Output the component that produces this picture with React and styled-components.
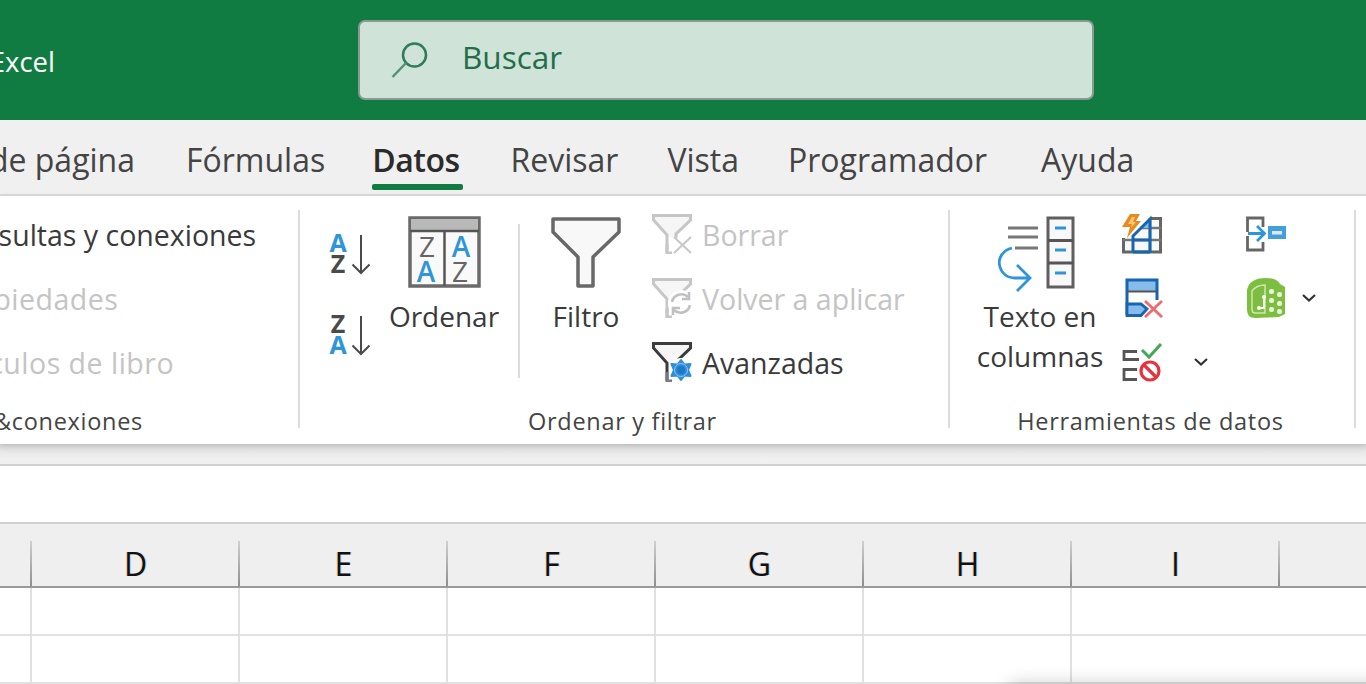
import React from "react";
import styled, { createGlobalStyle } from "styled-components";

const FONT = `"Open Sans", "Noto Sans", "Liberation Sans", sans-serif`;
const COLUMNS = ["D", "E", "F", "G", "H", "I"];
const TABS = ["Fórmulas", "Datos", "Revisar", "Vista", "Programador", "Ayuda"];

const GlobalStyle = createGlobalStyle`
  html, body {
    margin: 0;
    padding: 0;
    background: #fff;
    overflow: hidden;
  }
`;

const SortIcon = ({ top, bottom }) => {
  const color = (l) => (l === "A" ? "#2e95d8" : "#4a4a4a");
  return (
    <svg width="44" height="42" viewBox="0 0 44 42">
      <text x="10" y="18" textAnchor="middle" fontFamily="Open Sans" fontWeight="700" fontSize="25" fill={color(top)}>{top}</text>
      <text x="10" y="39" textAnchor="middle" fontFamily="Open Sans" fontWeight="700" fontSize="25" fill={color(bottom)}>{bottom}</text>
      <path d="M33 1v38M24.500 30.500 33 39l8.500-8.500" fill="none" stroke="#4a4a4a" strokeWidth="2" />
    </svg>
  );
};

const OrderIcon = () => (
  <svg width="74" height="72" viewBox="-1 0 74 72">
    <rect x="2" y="2" width="69" height="68" fill="#f9f9f9" stroke="#6a6a6a" strokeWidth="3.500" />
    <rect x="3" y="3" width="67" height="11" fill="#b9b9b9" />
    <path d="M2 15h69M36.500 15v55" stroke="#555" strokeWidth="2.500" />
    <g fontFamily="Open Sans" fontSize="28" textAnchor="middle">
      <text x="19" y="41" fill="#666">Z</text>
      <text x="18" y="66" fontWeight="600" fill="#2e95d8">A</text>
      <text x="53" y="41" fontWeight="600" fill="#2e95d8">A</text>
      <text x="52" y="66" fill="#666">Z</text>
    </g>
  </svg>
);

const FunnelIcon = () => (
  <svg width="72" height="72" viewBox="0 0 72 72">
    <path d="M3 3h66v13L43 41v29H28V41L3 16z" fill="#f8f8f8" stroke="#686868" strokeWidth="3.500" strokeLinejoin="round" />
  </svg>
);

const SmallFunnel = ({ badge, disabled }) => {
  const line = disabled ? "#c6c6c6" : "#3c3c3c";
  return (
    <svg width="40" height="40" viewBox="0 0 40 40">
      <path d="M1.500 1.500h37v4L24 20v3H15v16V21L1.500 6z" fill="#f6f6f6" stroke="none" />
      <path d="M15 39V21L1.500 6V1.500h37V6L24 20v4" fill="none" stroke={line} strokeWidth="3" />
      <path d="M15 30v9h5" fill="none" stroke={disabled ? "#c6c6c6" : "#7a7a7a"} strokeWidth="3" />
      {badge === "x" && <path d="M22 23l17 16M39 23 22 39" stroke="#c8c8c8" strokeWidth="2.200" fill="none" />}
      {badge === "redo" && (
        <g fill="none" stroke="#c0c0c0" strokeWidth="2.600">
          <circle cx="29" cy="25" r="13" fill="#fff" stroke="none" />
          <path d="M20 24a9.500 9.500 0 0 1 16-5" />
          <path d="M37 14v7h-7" />
          <path d="M38 27a9.500 9.500 0 0 1-16 5" />
          <path d="M21 37v-7h7" />
        </g>
      )}
      {badge === "gear" && (
        <g>
          <circle cx="29" cy="28" r="12" fill="#fff" />
          <path d="M29 18l3.500 4.500 6-.500-2.500 6 2.500 6-6-.500-3.500 4.500-3.500-4.500-6 .500 2.500-6-2.500-6 6 .500z" fill="#2e8fd8" stroke="#2e8fd8" strokeWidth="2" strokeLinejoin="round" />
          <circle cx="29" cy="28" r="4" fill="#1f78c8" />
          <circle cx="29" cy="28" r="6.500" fill="none" stroke="#8cc6ef" strokeWidth="1" />
        </g>
      )}
    </svg>
  );
};

const TextToColumnsIcon = () => (
  <svg width="84" height="76" viewBox="0 0 84 76">
    <path d="M10 12h30M10 21h30M17 32h23" stroke="#777" strokeWidth="3" fill="none" />
    <rect x="50" y="2" width="25" height="69" fill="#f8f8f8" stroke="#5f5f5f" strokeWidth="3" />
    <path d="M50 24.500h25M50 47h25" stroke="#555" strokeWidth="3" />
    <path d="M57 12h11M57 34h11M57 57h11" stroke="#2e95d8" strokeWidth="3" />
    <path d="M14 32C5 34 0 42 1.500 49 3 57 9 62 17 62h15M19 49l13 13-13 13" fill="none" stroke="#2e95d8" strokeWidth="2.800" />
  </svg>
);

const FlashFillIcon = () => (
  <svg width="40" height="40" viewBox="0 0 40 40">
    <path d="M1.500 24v14h37V4.500H28" fill="#f8f8f8" stroke="#666" strokeWidth="3" />
    <path d="M1 26h38M18 14h21M28 4v34" stroke="#777" strokeWidth="2.500" />
    <path d="M18 14 28 5v9z" fill="#7fb9e8" />
    <path d="M11 38V22L28 5v33M11 26h17M11 38h17" fill="none" stroke="#1565b0" strokeWidth="3" />
    <path d="M8 0h10l-4 7h5L5 24l3-11H0z" fill="#e88a1e" />
    <path d="M10 3h3l-2 5h3l-5 6 1-4H6z" fill="#f7c877" />
  </svg>
);

const RemoveDupIcon = () => (
  <svg width="42" height="40" viewBox="0 0 42 40">
    <g transform="translate(3)">
      <rect x="3" y="1.500" width="29" height="12" fill="#85bcec" />
      <path d="M2 37V2h30v20" fill="none" stroke="#1565b0" strokeWidth="3" />
      <path d="M2 13.500h30" stroke="#555" strokeWidth="2" />
      <path d="M2 26h14l6 5-6 6.500H2z" fill="#85bcec" stroke="#1565b0" strokeWidth="2.800" />
      <path d="M20 23l17 16M37 23 20 39" stroke="#ee6a70" strokeWidth="2.800" />
    </g>
  </svg>
);

const ValidationIcon = () => (
  <svg width="40" height="40" viewBox="0 0 40 40">
    <path d="M15 9.500H2v8h15M15 27.500H2v10h13" fill="none" stroke="#555" strokeWidth="2.800" />
    <path d="M20 8l7 7 12-13" fill="none" stroke="#43a85b" strokeWidth="3" />
    <circle cx="28" cy="29" r="9" fill="#fff" stroke="#e8323c" strokeWidth="3.200" />
    <path d="M22 23l12 12" stroke="#e8323c" strokeWidth="3.200" />
  </svg>
);

const ConsolidateIcon = () => (
  <svg width="40" height="36" viewBox="0 0 40 36">
    <path d="M17 11V2H1.500v14M1.500 20v14H17v-8" fill="none" stroke="#666" strokeWidth="2.800" />
    <path d="M2 17.500h15" stroke="#2e95d8" strokeWidth="3" />
    <path d="M11 10l7.500 7.500-7.500 7.500" fill="none" stroke="#2e95d8" strokeWidth="2.800" />
    <rect x="22" y="10" width="18" height="13" fill="#41a0dc" />
    <rect x="26" y="15" width="10" height="3.500" fill="#e4e4e4" />
  </svg>
);

const DataModelIcon = () => (
  <svg width="40" height="40" viewBox="0 0 40 40">
    <path d="M1 12C3 3 10 0 20 0c8 0 12 2 14 6l5 3v27l-6 3-23 1C3 40 1 37 1 30z" fill="#7dbd3f" />
    <path d="M6 13c3-4 7-6 13-6v28H9c-2 0-3-2-3-4z" fill="none" stroke="#cfe8b0" strokeWidth="1.500" />
    <g fill="#e8f4da">
      <rect x="23" y="11" width="5" height="5" rx="2" />
      <rect x="31" y="14" width="5" height="5" rx="2" />
      <rect x="23" y="20" width="5" height="5" rx="2" />
      <rect x="31" y="23" width="5" height="5" rx="2" />
      <rect x="23" y="29" width="5" height="5" rx="2" />
      <rect x="31" y="31" width="5" height="5" rx="2" />
    </g>
    <path d="M14 30h4v-9" fill="none" stroke="#fff" strokeWidth="1.800" />
    <circle cx="18" cy="19" r="2" fill="#fff" />
    <circle cx="13" cy="30" r="2" fill="#fff" />
  </svg>
);

const Chevron = () => (
  <ChevronBox>
    <svg width="14" height="8" viewBox="0 0 14 8">
      <path d="M1 1l6 5.500L13 1" fill="none" stroke="#333" strokeWidth="2.200" />
    </svg>
  </ChevronBox>
);

export default function App() {
  return (
    <Page>
      <GlobalStyle />
      <Header>
        <AppName><span>Excel</span></AppName>
        <Search>
          <svg width="38" height="38" viewBox="0 0 38 38">
            <circle cx="23.500" cy="14" r="11.500" fill="none" stroke="#2f7d58" strokeWidth="2.500" />
            <path d="M15 22 1.500 36" stroke="#4f9273" strokeWidth="2.500" />
          </svg>
          <SearchText>Buscar</SearchText>
        </Search>
      </Header>

      <Tabs>
        <CutTab><span>Disposición de página</span></CutTab>
        {TABS.map((t) => (
          <Tab key={t} $active={t === "Datos"}>{t}</Tab>
        ))}
      </Tabs>

      <Ribbon>
        <Group $width={298}>
          <Body>
            <CutList>
              <Row><RowText>Consultas y conexiones</RowText></Row>
              <Row><RowText $disabled $spread>Propiedades</RowText></Row>
              <Row><RowText $disabled $spread>Vínculos de libro</RowText></Row>
            </CutList>
          </Body>
          <CutLabel><span>Consultas &amp;conexiones</span></CutLabel>
        </Group>
        <Separator />

        <Group $width={648}>
          <Body>
            <SortStack>
              <SortIcon top="A" bottom="Z" />
              <SortIcon top="Z" bottom="A" />
            </SortStack>
            <LargeButton $width={108} $left={18}>
              <OrderIcon />
              <LargeLabel>Ordenar</LargeLabel>
            </LargeButton>
            <InnerSeparator />
            <LargeButton $width={72} $left={30}>
              <FunnelIcon />
              <LargeLabel>Filtro</LargeLabel>
            </LargeButton>
            <FilterList>
              <Row><SmallFunnel badge="x" disabled /><RowText $disabled>Borrar</RowText></Row>
              <Row><SmallFunnel badge="redo" disabled /><RowText $disabled>Volver a aplicar</RowText></Row>
              <Row><SmallFunnel badge="gear" /><RowText>Avanzadas</RowText></Row>
            </FilterList>
          </Body>
          <GroupLabel>Ordenar y filtrar</GroupLabel>
        </Group>
        <Separator />

        <Group $width={404}>
          <Body>
            <LargeButton $width={126} $left={27}>
              <TextToColumnsIcon />
              <LargeLabel $tight>Texto en columnas</LargeLabel>
            </LargeButton>
            <IconColumn $left={19} $width={124}>
              <IconRow><FlashFillIcon /></IconRow>
              <IconRow><RemoveDupIcon /></IconRow>
              <IconRow $gap={32}><ValidationIcon /><Chevron /></IconRow>
            </IconColumn>
            <IconColumn>
              <IconRow><ConsolidateIcon /></IconRow>
              <IconRow $gap={16}><DataModelIcon /><Chevron /></IconRow>
            </IconColumn>
          </Body>
          <GroupLabel>Herramientas de datos</GroupLabel>
        </Group>
        <Separator />
      </Ribbon>

      <RibbonGap />
      <FormulaBar />

      <ColumnHeader>
        <CornerCell />
        {COLUMNS.map((c) => (
          <HeaderCell key={c}>{c}</HeaderCell>
        ))}
        <HeaderRest />
      </ColumnHeader>

      {[0, 1].map((r) => (
        <SheetRow key={r}>
          <CornerData />
          {COLUMNS.map((c) => (
            <DataCell key={c} />
          ))}
        </SheetRow>
      ))}
      <CornerShadow />
    </Page>
  );
}

const Page = styled.div`
  position: relative;
  width: 1366px;
  height: 684px;
  overflow: hidden;
  background: #fff;
  font-family: ${FONT};
  color: #333;
`;

const Header = styled.header`
  height: 120px;
  background: #107c41;
  display: flex;
  padding-top: 20px;
  box-sizing: border-box;
`;

const AppName = styled.div`
  width: 55px;
  height: 82px;
  display: flex;
  justify-content: flex-end;
  align-items: center;
  color: #fff;
  font-size: 27.500px;
  white-space: nowrap;
`;

const Search = styled.div`
  margin-left: 303px;
  width: 736px;
  height: 80px;
  box-sizing: border-box;
  background: #cfe3d8;
  border: 2px solid #8b9a91;
  border-radius: 7px;
  display: flex;
  align-items: center;
  padding-left: 31px;
  gap: 33px;
`;

const SearchText = styled.span`
  color: #1f6f49;
  font-size: 31.500px;
  line-height: 70px;
  margin-bottom: 6px;
`;

const Tabs = styled.nav`
  height: 76px;
  box-sizing: border-box;
  background: #f0f0f0;
  border-bottom: 2px solid #dcdcdc;
  display: flex;
  gap: 49px;
  font-size: 32px;
  color: #444;
`;

const CutTab = styled.div`
  width: 135px;
  margin-right: 2px;
  height: 74px;
  line-height: 80px;
  display: flex;
  justify-content: flex-end;
  white-space: nowrap;
`;

const Tab = styled.div`
  position: relative;
  height: 74px;
  line-height: 80px;
  margin: ${(p) => (p.$active ? "0 2px 0 -2px" : "0")};
  font-weight: ${(p) => (p.$active ? 600 : 400)};
  letter-spacing: ${(p) => (p.$active ? "-0.5px" : "0")};
  color: ${(p) => (p.$active ? "#2b2b2b" : "#444")};

  &:last-child {
    margin-left: 5px;
  }

  &::after {
    content: "";
    display: ${(p) => (p.$active ? "block" : "none")};
    position: absolute;
    left: 0;
    right: -4px;
    bottom: 4px;
    height: 6px;
    border-radius: 2px;
    background: #107c41;
  }
`;

const Ribbon = styled.section`
  position: relative;
  z-index: 1;
  height: 248px;
  box-sizing: border-box;
  padding-top: 8px;
  background: #fff;
  display: flex;
  box-shadow: 0 2px 6px rgba(0, 0, 0, 0.16);
`;

const Group = styled.div`
  width: ${(p) => p.$width}px;
  display: flex;
  flex-direction: column;
`;

const Body = styled.div`
  height: 196px;
  display: flex;
`;

const GroupLabel = styled.div`
  height: 42px;
  line-height: 42px;
  padding-right: 3px;
  text-align: center;
  font-size: 23.500px;
  letter-spacing: 0.7px;
  color: #444;
`;

const CutLabel = styled(GroupLabel)`
  width: 143px;
  padding-right: 0;
  display: flex;
  justify-content: flex-end;
  white-space: nowrap;
`;

const Separator = styled.div`
  width: 2px;
  height: 218px;
  margin-top: 6px;
  background: #dcdcdc;
`;

const InnerSeparator = styled.div`
  width: 2px;
  height: 154px;
  margin: 20px 0 0 20px;
  background: #dcdcdc;
`;

const CutList = styled.div`
  margin: -2px 0 0 -54px;
`;

const Row = styled.div`
  height: 64px;
  display: flex;
  align-items: center;
  gap: 10px;
`;

const RowText = styled.span`
  margin-top: 2px;
  font-size: 28.500px;
  white-space: nowrap;
  letter-spacing: ${(p) => (p.$spread ? "0.5px" : "0")};
  color: ${(p) => (p.$disabled ? "#c4c4c4" : "#3a3a3a")};
`;

const SortStack = styled.div`
  margin: 30px 0 0 28px;
  width: 44px;
  display: flex;
  flex-direction: column;
  gap: 39px;
`;

const LargeButton = styled.div`
  width: ${(p) => p.$width}px;
  margin-left: ${(p) => p.$left}px;
  padding-top: 12px;
  display: flex;
  flex-direction: column;
  align-items: center;
`;

const LargeLabel = styled.div`
  margin-top: ${(p) => (p.$tight ? 4 : 8)}px;
  font-size: 28px;
  line-height: 40px;
  text-align: center;
  color: #3a3a3a;
`;

const FilterList = styled.div`
  margin: -2px 0 0 30px;
`;

const IconColumn = styled.div`
  width: ${(p) => (p.$width ? `${p.$width}px` : "auto")};
  margin-left: ${(p) => p.$left || 0}px;
  margin-top: -2px;
`;

const IconRow = styled.div`
  height: 64px;
  display: flex;
  align-items: center;
  gap: ${(p) => p.$gap || 0}px;
`;

const ChevronBox = styled.span`
  display: flex;
`;

const RibbonGap = styled.div`
  height: 20px;
  background: linear-gradient(#dcdcdc, #f0f0f0 70%);
`;

const FormulaBar = styled.div`
  height: 56px;
  background: #fff;
  border-top: 2px solid #d0d0d0;
  border-bottom: 2px solid #d0d0d0;
`;

const ColumnHeader = styled.div`
  height: 64px;
  box-sizing: border-box;
  background: #efefef;
  border-bottom: 2px solid #9a9a9a;
  display: flex;
`;

const CornerCell = styled.div`
  width: 30px;
`;

const HeaderCell = styled.div`
  position: relative;
  width: 208px;
  flex: none;
  box-sizing: border-box;
  padding-left: 3px;
  text-align: center;
  font-size: 32px;
  line-height: 80px;
  color: #111;
  text-shadow: -1px 0 rgba(232, 150, 60, 0.3), 1px 0 rgba(70, 180, 240, 0.3);

  &::before {
    content: "";
    position: absolute;
    left: 0;
    top: 17px;
    bottom: 0;
    width: 2px;
    background: linear-gradient(#cfcfcf, #8f8f8f);
  }
`;

const HeaderRest = styled(HeaderCell)`
  flex: 1;
`;

const SheetRow = styled.div`
  height: 48px;
  box-sizing: border-box;
  border-bottom: 2px solid #e1e1e1;
  display: flex;
`;

const CornerData = styled.div`
  width: 30px;
`;

const DataCell = styled.div`
  width: 208px;
  flex: none;
  box-sizing: border-box;
  border-left: 2px solid #e1e1e1;
`;

const CornerShadow = styled.div`
  position: absolute;
  left: 1010px;
  right: -20px;
  top: 684px;
  height: 20px;
  box-shadow: 0 0 18px rgba(0, 0, 0, 0.22);
`;
